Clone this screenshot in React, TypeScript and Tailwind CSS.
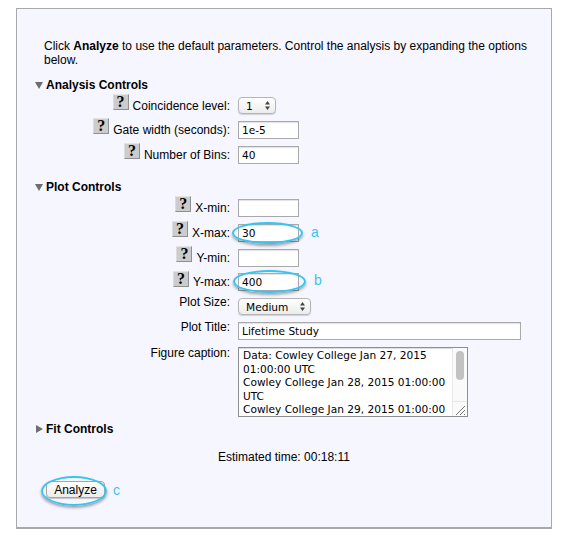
const inputCls =
  'block h-[18px] border border-[#a9a9a9] bg-white pl-[3px] font-["DejaVu_Sans",sans-serif] text-[10.6px] text-black outline-none shadow-[inset_0_1px_1px_rgba(0,0,0,0.12)]'

function HelpButton() {
  return (
    <span className="mr-1 -mt-[7px] flex h-[16px] w-[16px] items-center justify-center border border-[#8f8f8f] border-t-[#e4e4e4] border-l-[#dcdcdc] bg-[#cccccc] font-['Liberation_Serif',serif] text-[16px] leading-none font-bold text-black">
      ?
    </span>
  )
}

function Row({ label, help, children, rowClass, labelClass }: { label: string; help?: boolean; children: React.ReactNode; rowClass: string; labelClass?: string }) {
  return (
    <div className={`flex items-center ${rowClass}`}>
      <div className={`flex w-[213px] items-center justify-end ${labelClass ?? ''}`}>
        {help && <HelpButton />}
        <span>{label}</span>
      </div>
      <div className="relative ml-2">{children}</div>
    </div>
  )
}

function SelectBox({ value, width }: { value: string; width: string }) {
  return (
    <div className={`flex h-[17px] items-center justify-between rounded-[4px] border border-[#b5b5b5] bg-gradient-to-b from-white to-[#ececec] pr-1 pl-[7px] font-["DejaVu_Sans",sans-serif] text-[10.6px] text-black shadow-[0_1px_1px_rgba(0,0,0,0.15)] ${width}`}>
      <span>{value}</span>
      <svg width="7" height="11" viewBox="0 0 7 11">
        <path d="M3.5 1 6 4.5H1zM3.5 10 1 6.5h5z" fill="#444" />
      </svg>
    </div>
  )
}

function Oval({ className }: { className: string }) {
  return (
    <div className={`pointer-events-none absolute rounded-[50%] border-[2.5px] border-[#38c4ee] shadow-[0_2px_3px_rgba(0,0,0,0.35)] ${className}`} />
  )
}

function Section({ open, title }: { open: boolean; title: string }) {
  return (
    <div className="flex items-center text-[12px] font-bold">
      <svg width="8" height="8" viewBox="0 0 8 8" className="mr-[3px]">
        <path d={open ? 'M0 1h8L4 8z' : 'M1 0l7 4-7 4z'} fill="#6e6e6e" />
      </svg>
      {title}
    </div>
  )
}

export default function App() {
  return (
    <div className="h-[544px] w-[565px] bg-white pt-2 pl-4 font-['Liberation_Sans',sans-serif] text-[12px] leading-[14px] text-black">
      <div className="relative h-[521px] w-[536px] border border-b-2 border-[#a8a8a8] bg-[#f5f6ff] pt-[30px] pl-[27px]">
        <p className="w-[490px]">
          Click <b>Analyze</b> to use the default parameters. Control the analysis by expanding the options below.
        </p>

        <div className="mt-[11px] -ml-[9px]">
          <Section open title="Analysis Controls" />
        </div>
        <div className="-ml-[27px]">
          <div className="mt-[2px]">
            <Row label="Coincidence level:" help rowClass="h-[23px]">
              <SelectBox value="1" width="w-[38px]" />
            </Row>
            <Row label="Gate width (seconds):" help rowClass="h-[25px]">
              <input readOnly value="1e-5" className={`${inputCls} w-[61px]`} />
            </Row>
            <Row label="Number of Bins:" help rowClass="h-[25px]">
              <input readOnly value="40" className={`${inputCls} w-[61px]`} />
            </Row>
          </div>
        </div>

        <div className="mt-[13px] -ml-[9px]">
          <Section open title="Plot Controls" />
        </div>
        <div className="mt-[1px] -ml-[27px]">
          <Row label="X-min:" help rowClass="h-[25px]">
            <input readOnly className={`${inputCls} w-[61px]`} />
          </Row>
          <Row label="X-max:" help rowClass="h-[25px]">
            <input readOnly value="30" className={`${inputCls} w-[61px]`} />
            <Oval className="-top-[2px] -left-[6px] h-[22px] w-[71px]" />
            <span className="absolute top-[1px] left-[73px] text-[14px] text-[#45bff0]">a</span>
          </Row>
          <Row label="Y-min:" help rowClass="h-[25px]">
            <input readOnly className={`${inputCls} w-[61px]`} />
          </Row>
          <Row label="Y-max:" help rowClass="h-[24px]">
            <input readOnly value="400" className={`${inputCls} w-[61px]`} />
            <Oval className="-top-[3px] -left-[5px] h-[23px] w-[73px]" />
            <span className="absolute top-[0px] left-[76px] text-[14px] text-[#45bff0]">b</span>
          </Row>
          <Row label="Plot Size:" rowClass="h-[25px]" labelClass="-mt-[9px]">
            <SelectBox value="Medium" width="w-[73px]" />
          </Row>
          <Row label="Plot Title:" rowClass="h-[24px]" labelClass="-mt-[9px]">
            <input readOnly value="Lifetime Study" className={`${inputCls} w-[283px]`} />
          </Row>
          <div className="mt-[4px] flex h-[69px] items-start">
            <div className="-mt-[1px] w-[213px] text-right">Figure caption:</div>
            <div className="relative ml-2 h-[70px] w-[230px] overflow-hidden border border-[#8e8e8e] bg-white pt-[1px] pl-1 font-['DejaVu_Sans',sans-serif] text-[10.6px] leading-[13.5px] shadow-[inset_0_1px_1px_rgba(0,0,0,0.15)]">
              <div>Data: Cowley College Jan 27, 2015</div>
              <div>01:00:00 UTC</div>
              <div>Cowley College Jan 28, 2015 01:00:00</div>
              <div>UTC</div>
              <div>Cowley College Jan 29, 2015 01:00:00</div>
              <div className="absolute top-0 right-0 bottom-0 w-[15px] border-l border-[#e8e8e8] bg-[#fafafa]">
                <div className="mx-auto mt-[3px] h-[29px] w-[8px] rounded-full bg-[#c2c2c2]" />
                <div className="absolute right-0 bottom-0 h-[15px] w-[15px] border-t border-[#e8e8e8]">
                  <svg width="14" height="14" viewBox="0 0 14 14">
                    <path d="M4 13l9-9M8 13l5-5M12 13l1-1" stroke="#777" strokeWidth="1" fill="none" />
                  </svg>
                </div>
              </div>
            </div>
          </div>
        </div>

        <div className="mt-[6px] -ml-[9px]">
          <Section open={false} title="Fit Controls" />
        </div>

        <p className="mt-[14px] ml-[174px]">Estimated time: 00:18:11</p>

        <div className="relative mt-[17px] ml-[2px] w-[59px]">
          <div className="flex h-[17px] items-center justify-center rounded-[4px] border border-[#a5a5a5] bg-gradient-to-b from-white to-[#ececec] text-[12px] shadow-[0_1px_1px_rgba(0,0,0,0.2)]">
            Analyze
          </div>
          <Oval className="-top-[5px] -left-[5px] h-[30px] w-[66px]" />
          <span className="absolute top-[2px] left-[67px] text-[14px] text-[#45bff0]">c</span>
        </div>
      </div>
    </div>
  )
}
